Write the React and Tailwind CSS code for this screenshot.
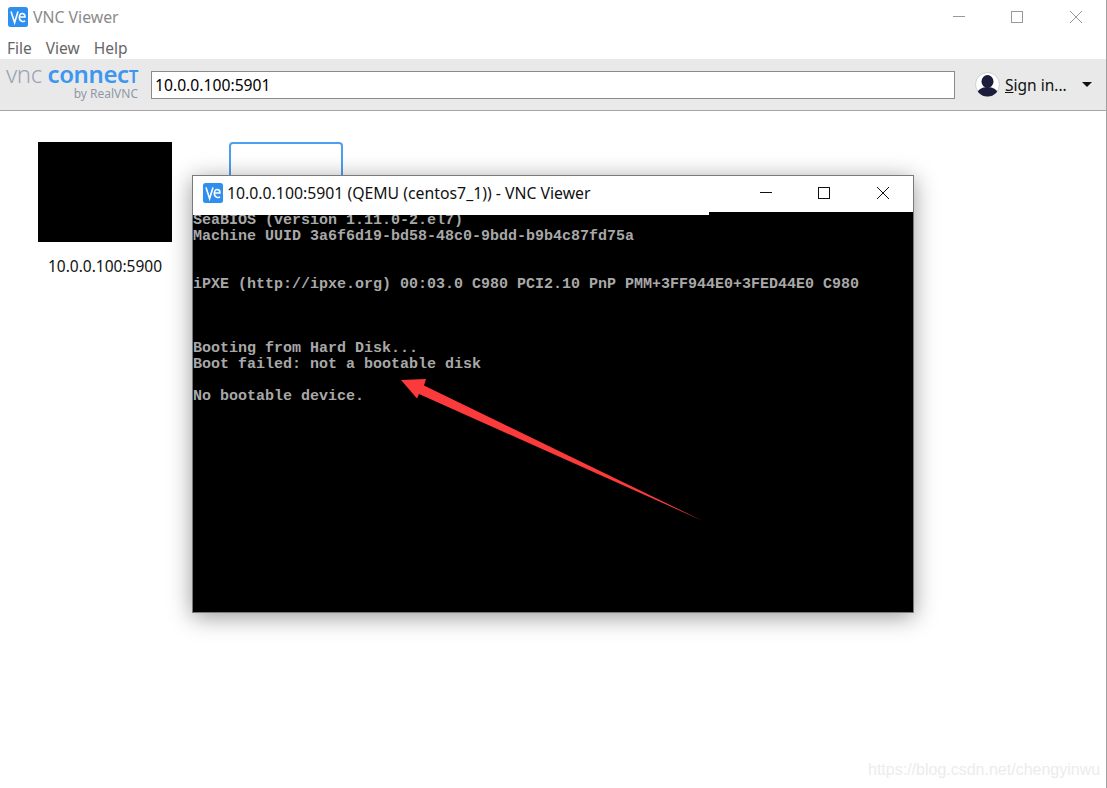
import React from "react";

function VncIcon({ className }) {
  return (
    <svg viewBox="0 0 20 20" className={className}>
      <rect width="20" height="20" rx="2.5" fill="#2f8fef" />
      <path d="M3 4.5 L6.6 15.5 L10 4.5" fill="none" stroke="#fff" strokeWidth="1.6" />
      <path d="M11.4 10 H17 C17 5.6 11.3 5.2 11.3 10.2 C11.3 15 15.8 15.2 17 13.6" fill="none" stroke="#fff" strokeWidth="1.5" />
    </svg>
  );
}

function Controls({ color }) {
  return (
    <div className="flex items-center gap-[46px]">
      <svg width="12" height="12" viewBox="0 0 12 12"><path d="M0 5.5H12" stroke={color} strokeWidth="1" /></svg>
      <svg width="12" height="12" viewBox="0 0 12 12"><rect x="0.5" y="0.5" width="11" height="11" fill="none" stroke={color} strokeWidth="1" /></svg>
      <svg width="12" height="12" viewBox="0 0 12 12" className="ml-[1px]"><path d="M0 0L12 12M12 0L0 12" stroke={color} strokeWidth="1" /></svg>
    </div>
  );
}

const terminal = `SeaBIOS (version 1.11.0-2.el7)
Machine UUID 3a6f6d19-bd58-48c0-9bdd-b9b4c87fd75a


iPXE (http://ipxe.org) 00:03.0 C980 PCI2.10 PnP PMM+3FF944E0+3FED44E0 C980



Booting from Hard Disk...
Boot failed: not a bootable disk

No bootable device.`;

export default function App() {
  return (
    <div className="relative w-[1107px] h-[788px] overflow-hidden bg-white flex flex-col border-r border-[#a0a0a0] font-['Noto_Sans',sans-serif]">
      {/* main title bar */}
      <div className="h-[34px] flex items-center pl-[8px] pr-[24px] shrink-0">
        <VncIcon className="w-[20px] h-[20px]" />
        <span className="ml-[5px] mt-[1px] text-[15.8px] text-[#8a8a8a]">VNC Viewer</span>
        <div className="ml-auto">
          <Controls color="#999999" />
        </div>
      </div>

      {/* menu */}
      <div className="h-[25px] flex items-center gap-[14px] pl-[7px] pt-[5px] text-[15.5px] text-[#666666] shrink-0">
        <span>File</span>
        <span>View</span>
        <span>Help</span>
      </div>

      {/* toolbar */}
      <div className="h-[52px] shrink-0 flex items-center bg-[#e9e9e9] border-b border-[#a6a6a6] pl-[6px] pr-[14px]">
        <div className="w-[132px] -mt-[2px] flex flex-col items-end leading-none">
          <div className="flex items-baseline text-[24px] h-[16px] leading-[14px] tracking-[-0.4px] whitespace-nowrap">
            <span className="text-[#9aa3b5] font-light">vnc&nbsp;</span>
            <span className="text-[#3d97ee] font-semibold">connec</span>
            <span className="text-[#3d97ee] font-semibold text-[17px]">T</span>
          </div>
          <span className="text-[12px] text-[#8f98a8] mt-[5px]">by RealVNC</span>
        </div>
        <div className="ml-[13px] mt-[1px] w-[804px] h-[28px] bg-white border border-[#8a8a8a] flex items-center pl-[3px] pt-[1px] text-[15.7px] text-black">
          10.0.0.100:5901
        </div>
        <svg viewBox="0 0 25 25" className="ml-[20px] w-[25px] h-[25px] shrink-0">
          <circle cx="12.5" cy="12.5" r="12" fill="#fff" stroke="#cfcfcf" />
          <clipPath id="av"><circle cx="12.5" cy="12.5" r="12" /></clipPath>
          <g clipPath="url(#av)" fill="#1c1c3c">
            <ellipse cx="12.5" cy="9.5" rx="6" ry="6.5" />
            <ellipse cx="12.5" cy="22" rx="10.5" ry="7" />
          </g>
        </svg>
        <span className="ml-[5px] mt-[3px] text-[15.5px] text-[#111111]"><u>S</u>ign in...</span>
        <div className="ml-auto w-0 h-0 border-x-[5px] border-x-transparent border-t-[5px] border-t-[#111111]" />
      </div>

      {/* connections */}
      <div className="flex items-start gap-[57px] pl-[38px] pt-[31px]">
        <div className="flex flex-col items-center w-[134px]">
          <div className="w-[134px] h-[100px] bg-black" />
          <span className="mt-[14px] text-[15.5px] leading-[20px] text-[#111111] whitespace-nowrap">10.0.0.100:5900</span>
        </div>
        <div className="w-[114px] h-[100px] border-2 border-[#4d9ff0] rounded-[4px]" />
      </div>

      {/* floating VNC window */}
      <div className="absolute left-[192px] top-[175px] w-[722px] h-[438px] border border-[#7a7a7a] bg-black flex flex-col overflow-hidden shadow-[0_4px_22px_rgba(0,0,0,0.4)]">
        <div className="h-[36px] shrink-0 bg-white flex items-center pl-[10px] pr-[24px] pb-[2px]">
          <VncIcon className="w-[20px] h-[20px]" />
          <span className="ml-[4px] mt-[1px] text-[15.8px] text-[#111111] whitespace-nowrap">10.0.0.100:5901 (QEMU (centos7_1)) - VNC Viewer</span>
          <div className="ml-auto">
            <Controls color="#111111" />
          </div>
        </div>
        <div className="relative flex-1 bg-black overflow-hidden pt-[1px]">
          <pre className="font-['Liberation_Mono',monospace] font-bold text-[15px] leading-[16px] text-[#a8a8a8] whitespace-pre">{terminal}</pre>
          <div className="absolute left-0 top-0 w-[516px] h-[3px] bg-white" />
        </div>
      </div>

      {/* annotation arrow */}
      <svg className="absolute left-0 top-0 pointer-events-none" width="1107" height="788" viewBox="0 0 1107 788">
        <polygon points="401,380 426,379 424,385.5 703,521 419,394 417,398.5" fill="#fb3b3b" />
      </svg>

      {/* watermark */}
      <span className="absolute left-[868px] top-[760px] text-[16px] leading-[20px] text-[#ececec] font-['Liberation_Sans',sans-serif] whitespace-nowrap">https://blog.csdn.net/chengyinwu</span>
    </div>
  );
}
